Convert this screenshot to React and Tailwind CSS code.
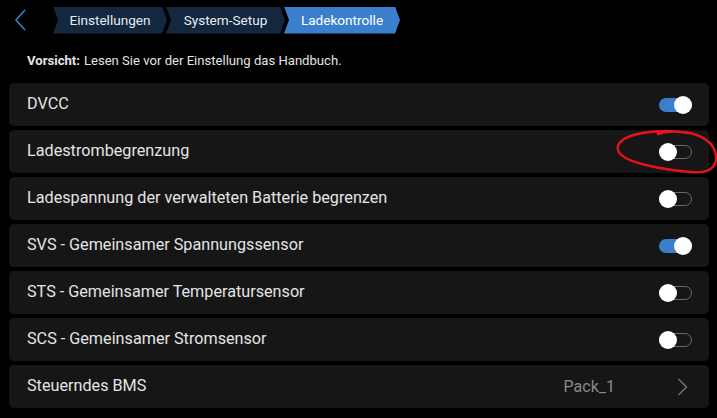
import React from "react";

function Toggle({ on }) {
  return (
    <div className="relative w-[33px] h-[14px]">
      {on ? (
        <div className="absolute inset-0 rounded-full bg-[#3b7fcc]" />
      ) : (
        <div className="absolute inset-0 rounded-full border-[1.5px] border-[#6a6a6a]" />
      )}
      <div
        className={
          "absolute top-[-2px] w-[18px] h-[18px] rounded-full bg-white " +
          (on ? "left-[15px]" : "left-0")
        }
      />
    </div>
  );
}

function Row({ label, children }) {
  return (
    <div className="flex items-center justify-between h-[43px] rounded-[5px] bg-[#161616] pl-[18px] pr-[17px]">
      <span className="text-[16.2px] text-[#e4e4e4]">{label}</span>
      {children}
    </div>
  );
}

export default function App() {
  const rows = [
    ["DVCC", true],
    ["Ladestrombegrenzung", false],
    ["Ladespannung der verwalteten Batterie begrenzen", false],
    ["SVS - Gemeinsamer Spannungssensor", true],
    ["STS - Gemeinsamer Temperatursensor", false],
    ["SCS - Gemeinsamer Stromsensor", false],
  ];
  return (
    <div
      className="relative w-[717px] h-[418px] bg-black overflow-hidden"
      style={{ fontFamily: "Roboto, 'Liberation Sans', sans-serif" }}
    >
      <div className="flex items-center h-[39px] pt-[1px]">
        <div className="w-[53px] flex items-center pl-[14px]">
          <svg width="14" height="24" viewBox="0 0 14 24">
            <path d="M11 2 L2 12 L11 22" fill="none" stroke="#3b7fcc" strokeWidth="1.6" />
          </svg>
        </div>
        <div className="flex items-center h-[27px] w-[114px] bg-[#13273f] text-[#e8ecf2] text-[13.6px] justify-center [clip-path:polygon(0_0,109px_0,114px_13.5px,109px_27px,0_27px,5px_13.5px)]">
          Einstellungen
        </div>
        <div className="flex items-center h-[27px] w-[119px] ml-[-1px] bg-[#13273f] text-[#e8ecf2] text-[13.6px] justify-center [clip-path:polygon(0_0,114px_0,119px_13.5px,114px_27px,0_27px,5px_13.5px)]">
          System-Setup
        </div>
        <div className="flex items-center h-[27px] w-[116px] ml-[-1px] bg-[#3b7fcc] text-white text-[13.6px] justify-center [clip-path:polygon(0_0,111px_0,116px_13.5px,111px_27px,0_27px,5px_13.5px)]">
          Ladekontrolle
        </div>
      </div>
      <div className="h-[44px] flex items-center pl-[27px] text-[13.1px] text-[#e4e4e4]">
        <span className="font-bold">Vorsicht:</span>
        <span className="ml-[4px]">Lesen Sie vor der Einstellung das Handbuch.</span>
      </div>
      <div className="flex flex-col gap-[4px] pl-[9px] pr-[8px]">
        {rows.map(([label, on]) => (
          <Row key={label} label={label}>
            <Toggle on={on} />
          </Row>
        ))}
        <div className="flex items-center justify-between h-[43px] rounded-[5px] bg-[#161616] pl-[18px] pr-[21px]">
          <span className="text-[16.2px] text-[#e4e4e4]">Steuerndes BMS</span>
          <div className="flex items-center">
            <span className="text-[16px] text-[#8a8a8a]">Pack_1</span>
            <svg className="ml-[62px]" width="11" height="20" viewBox="0 0 11 20">
              <path d="M1.5 2 L9.5 10 L1.5 18" fill="none" stroke="#777" strokeWidth="1.4" />
            </svg>
          </div>
        </div>
      </div>
      <svg
        className="absolute left-0 top-0 pointer-events-none"
        width="717"
        height="418"
        viewBox="0 0 717 418"
      >
        <path
          d="M688 133 C660 128 622 133 618 146 C615 158 640 167 690 172 C708 174 717 168 716 156 C715 144 703 134 683 132 C672 131 664 132 658 134"
          fill="none"
          stroke="#e8121a"
          strokeWidth="2.4"
          strokeLinecap="round"
        />
      </svg>
    </div>
  );
}
